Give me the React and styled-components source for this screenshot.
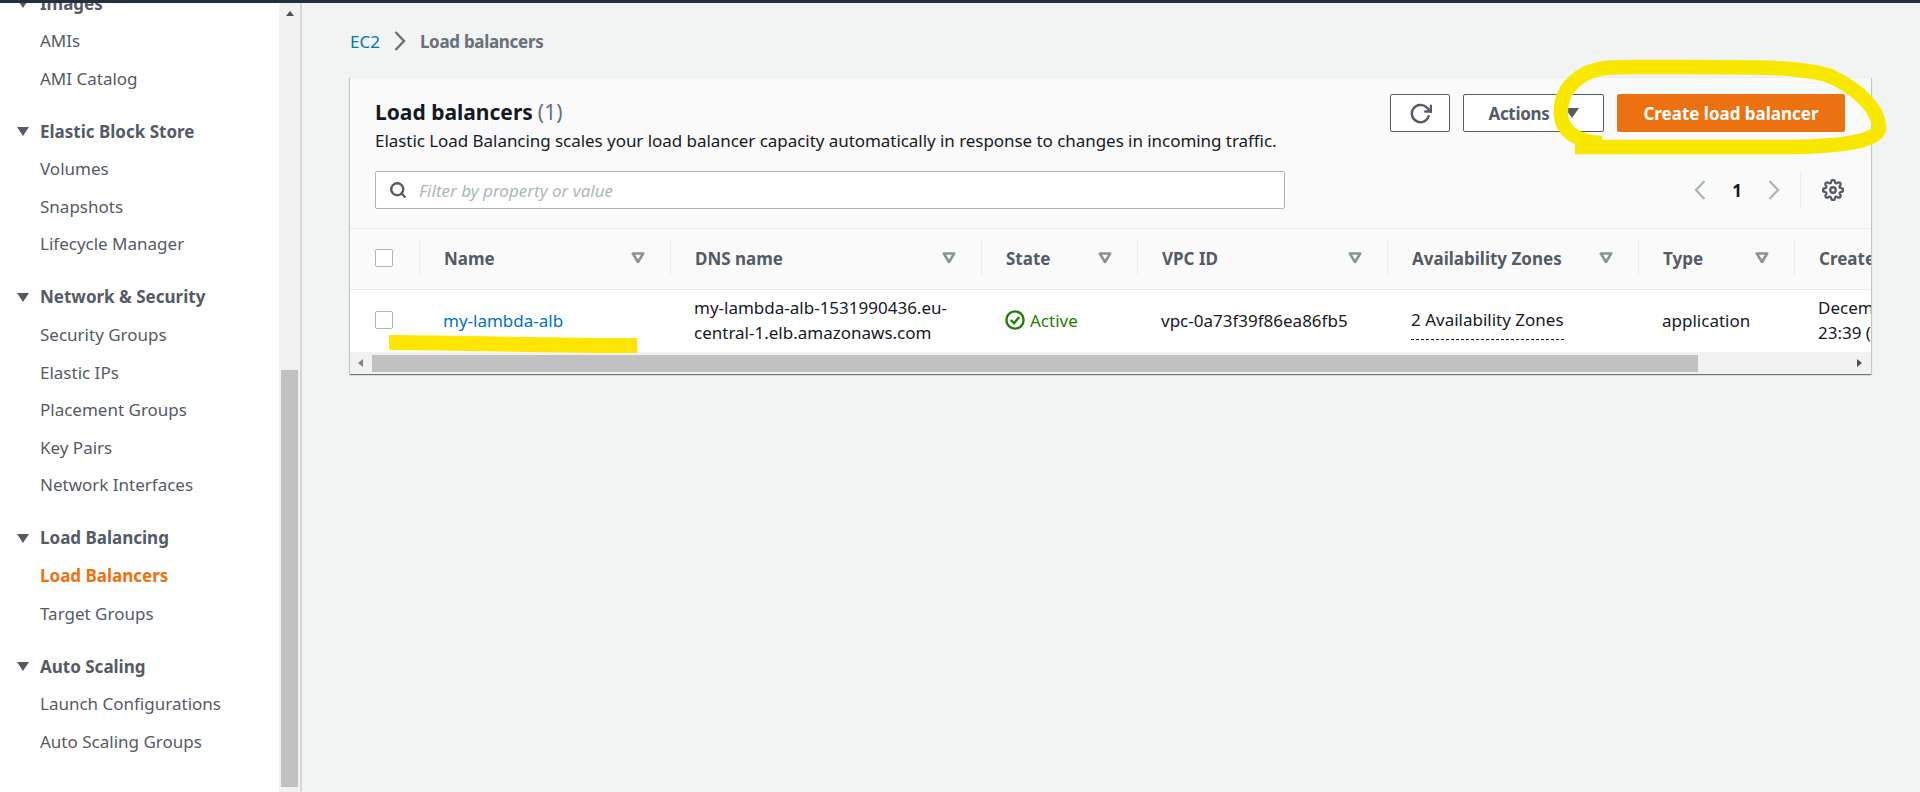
import React from 'react';
import styled, { createGlobalStyle } from 'styled-components';
import { FiRotateCw, FiSettings, FiSearch } from 'react-icons/fi';

const FONT = '"Noto Sans", "Open Sans", sans-serif';

const GlobalStyle = createGlobalStyle`
  html, body {
    margin: 0;
    padding: 0;
    height: 100%;
    overflow: hidden;
    background: #f2f3f3;
    font-family: ${FONT};
    font-size: 17px;
    color: #16191f;
  }
  #root { height: 100%; }
`;

const Page = styled.div`
  position: relative;
  display: flex;
  flex-direction: column;
  height: 792px;
  overflow: hidden;
`;

const TopLine = styled.div`
  height: 3px;
  flex: none;
  background: #232f3e;
`;

const Body = styled.div`
  display: flex;
  flex: 1;
  min-height: 0;
`;

const Sidebar = styled.aside`
  display: flex;
  width: 302px;
  flex: none;
  border-right: 2px solid #d5d8d8;
  box-sizing: border-box;
  background: #fff;
`;

const SideScroll = styled.nav`
  flex: 1;
  overflow: hidden;
`;

const SideList = styled.div`
  margin-top: -19px;
`;

const SideGroup = styled.div`
  margin-bottom: 15px;
`;

const SideHeading = styled.div`
  display: flex;
  align-items: center;
  height: 38px;
  font-weight: 700;
  color: #545b64;
`;

const HeadingCaret = styled.span`
  width: 0;
  height: 0;
  margin: 1px 11px 0 17px;
  border-left: 6px solid transparent;
  border-right: 6px solid transparent;
  border-top: 9px solid #545b64;
`;

const SideItem = styled.div`
  height: 37.6px;
  line-height: 37.6px;
  padding-left: 40px;
  font-weight: ${p => (p.$active ? 700 : 400)};
  color: ${p => (p.$active ? '#ec7211' : '#545b64')};
`;

const ScrollTrack = styled.div`
  width: 21px;
  flex: none;
  display: flex;
  flex-direction: column;
  align-items: center;
  background: #f1f1f1;
`;

const TrackArrow = styled.span`
  width: 0;
  height: 0;
  margin-top: 8px;
  border-left: 4px solid transparent;
  border-right: 4px solid transparent;
  border-bottom: 5px solid #505050;
`;

const TrackThumb = styled.div`
  width: 17px;
  height: 417px;
  margin-top: 354px;
  background: #c1c1c1;
`;

const Main = styled.main`
  flex: 1;
  min-width: 0;
  padding: 0 49px 0 48px;
`;

const Breadcrumbs = styled.div`
  display: flex;
  align-items: center;
  height: 74px;
  padding-top: 2px;
  box-sizing: border-box;
`;

const CrumbLink = styled.span`
  color: #0073bb;
`;

const CrumbSep = styled.span`
  display: flex;
  margin: 0 14px;
  color: #687078;
`;

const CrumbCurrent = styled.span`
  font-weight: 700;
  letter-spacing: -0.3px;
  color: #687078;
`;

const Card = styled.section`
  background: #fafafa;
  box-shadow: 0 1px 1px 0 rgba(0, 28, 36, 0.4), 1px 1px 1px 0 rgba(0, 28, 36, 0.15), -1px 1px 1px 0 rgba(0, 28, 36, 0.15);
  border-top: 1px solid #eaeded;
`;

const CardHead = styled.div`
  display: flex;
  justify-content: space-between;
  padding: 16px 26px 0 25px;
  height: 93px;
  box-sizing: border-box;
`;

const TitleBlock = styled.div`
  padding-top: 4px;
`;

const Title = styled.h1`
  margin: 0;
  font-size: 21px;
  line-height: 28px;
  font-weight: 700;
  color: #16191f;
`;

const Count = styled.span`
  font-weight: 400;
  color: #687078;
  margin-left: 5px;
`;

const Description = styled.p`
  margin: 4px 0 0;
  line-height: 22px;
  letter-spacing: -0.05px;
  color: #16191f;
`;

const Actions = styled.div`
  display: flex;
  gap: 13px;
`;

const OutlineButton = styled.button`
  display: flex;
  align-items: center;
  justify-content: center;
  gap: 15px;
  width: ${p => p.$width}px;
  height: 38px;
  padding: 0;
  box-sizing: border-box;
  border: 1px solid #545b64;
  border-radius: 2px;
  background: #fff;
  color: #545b64;
  font-family: ${FONT};
  font-size: 17px;
  font-weight: 700;
  letter-spacing: -0.3px;
`;

const ButtonCaret = styled.span`
  width: 0;
  height: 0;
  border-left: 7px solid transparent;
  border-right: 7px solid transparent;
  border-top: 10px solid #545b64;
`;

const PrimaryButton = styled.button`
  width: 228px;
  height: 38px;
  padding: 0;
  border: 0;
  border-radius: 2px;
  background: #ec7211;
  color: #fff;
  font-family: ${FONT};
  font-size: 17px;
  font-weight: 700;
`;

const FilterRow = styled.div`
  display: flex;
  align-items: center;
  justify-content: space-between;
  height: 38px;
  padding: 0 27px 0 25px;
  margin-bottom: 19px;
`;

const FilterBox = styled.div`
  display: flex;
  align-items: center;
  width: 910px;
  height: 38px;
  box-sizing: border-box;
  padding-left: 13px;
  gap: 12px;
  border: 1px solid #aab7b8;
  border-radius: 2px;
  background: #fff;
  color: #545b64;
`;

const Placeholder = styled.span`
  font-style: italic;
  color: #aab7b8;
`;

const Pager = styled.div`
  display: flex;
  align-items: center;
  height: 38px;
`;

const PageArrow = styled.span`
  display: flex;
  color: #aab7b8;
`;

const PageNumber = styled.span`
  width: 62px;
  text-align: center;
  font-weight: 700;
`;

const PagerDivider = styled.span`
  width: 1px;
  height: 38px;
  margin: 0 21px 0 20px;
  background: #eaeded;
`;

const GearIcon = styled.span`
  display: flex;
  color: #545b64;
`;

const TableArea = styled.div`
  overflow: hidden;
`;

const Row = styled.div`
  display: flex;
  width: 1700px;
  height: ${p => p.$height}px;
  box-sizing: border-box;
  padding-bottom: 2px;
  align-items: center;
  background: ${p => (p.$head ? '#fafafa' : '#fff')};
  border-top: 1px solid #eaeded;
`;

const CheckCell = styled.div`
  flex: none;
  width: 69px;
  padding-left: 25px;
  box-sizing: border-box;
  display: flex;
  margin-top: ${p => p.$shift || 0}px;
`;

const Checkbox = styled.span`
  width: 18px;
  height: 18px;
  box-sizing: border-box;
  border: 1px solid #aab7b8;
  border-radius: 2px;
  background: #fff;
`;

const HeadCell = styled.div`
  flex: none;
  display: flex;
  align-items: center;
  justify-content: space-between;
  width: ${p => p.$width}px;
  height: 36px;
  box-sizing: border-box;
  padding: 0 25px 0 24px;
  border-left: 1px solid #eaeded;
  font-weight: 700;
  color: #545b64;
  white-space: nowrap;
`;

const SortCaret = styled.svg`
  flex: none;
  width: 14px;
  height: 12px;
  color: #879596;
`;

const Cell = styled.div`
  flex: none;
  width: ${p => p.$width}px;
  box-sizing: border-box;
  padding: 0 20px 0 24px;
  line-height: 25px;
  color: #16191f;
`;

const NameLink = styled.span`
  color: #0073bb;
`;

const StatusOk = styled.span`
  display: flex;
  align-items: center;
  gap: 5px;
  color: #1d8102;
`;

const Dashed = styled.span`
  display: inline-block;
  padding: 7px 0;
  border-bottom: 1px dashed #16191f;
  white-space: nowrap;
`;

const HScroll = styled.div`
  display: flex;
  align-items: center;
  height: 22px;
  background: #f1f1f1;
`;

const HArrow = styled.span`
  width: 0;
  height: 0;
  flex: none;
  border-top: 4px solid transparent;
  border-bottom: 4px solid transparent;
  ${p => (p.$right ? 'border-left: 5px solid #505050;' : 'border-right: 5px solid #808080;')}
  margin: ${p => (p.$right ? '0 9px 0 159px' : '0 9px 0 8px')};
`;

const HThumb = styled.div`
  width: 1327px;
  height: 17px;
  background: #c1c1c1;
`;

const Scribble = styled.svg`
  position: absolute;
  top: 0;
  left: 0;
  pointer-events: none;
`;

const columns = [
  { title: 'Name', width: 251 },
  { title: 'DNS name', width: 311 },
  { title: 'State', width: 156 },
  { title: 'VPC ID', width: 250 },
  { title: 'Availability Zones', width: 251 },
  { title: 'Type', width: 156 },
  { title: 'Created', width: 300 },
];

const navGroups = [
  { title: 'Images', items: ['AMIs', 'AMI Catalog'] },
  { title: 'Elastic Block Store', items: ['Volumes', 'Snapshots', 'Lifecycle Manager'] },
  {
    title: 'Network & Security',
    items: ['Security Groups', 'Elastic IPs', 'Placement Groups', 'Key Pairs', 'Network Interfaces'],
  },
  { title: 'Load Balancing', items: ['Load Balancers', 'Target Groups'] },
  { title: 'Auto Scaling', items: ['Launch Configurations', 'Auto Scaling Groups'] },
];

const Sort = () => (
  <SortCaret viewBox="0 0 14 12">
    <path d="M1.8 1.5h10.4L7 10z" fill="none" stroke="currentColor" strokeWidth="2.6" strokeLinejoin="round" />
  </SortCaret>
);

const Chevron = ({ left }) => (
  <svg width="12" height="20" viewBox="0 0 12 20" fill="none" stroke="currentColor" strokeWidth="2.4">
    <path d={left ? 'M10.5 1L2 10l8.5 9' : 'M1.5 1L10 10l-8.5 9'} />
  </svg>
);

const ActiveIcon = () => (
  <svg width="20" height="20" viewBox="0 0 20 20" fill="none" stroke="#1d8102" strokeWidth="2.4">
    <circle cx="10" cy="10" r="8.6" />
    <path d="M5.8 10l3.2 3.2 5.2-6.2" />
  </svg>
);

const App = () => (
  <Page>
    <GlobalStyle />
    <TopLine />
    <Body>
      <Sidebar>
        <SideScroll>
          <SideList>
            {navGroups.map(group => (
              <SideGroup key={group.title}>
                <SideHeading>
                  <HeadingCaret />
                  {group.title}
                </SideHeading>
                {group.items.map(item => (
                  <SideItem key={item} $active={item === 'Load Balancers'}>
                    {item}
                  </SideItem>
                ))}
              </SideGroup>
            ))}
          </SideList>
        </SideScroll>
        <ScrollTrack>
          <TrackArrow />
          <TrackThumb />
        </ScrollTrack>
      </Sidebar>
      <Main>
        <Breadcrumbs>
          <CrumbLink>EC2</CrumbLink>
          <CrumbSep>
            <Chevron />
          </CrumbSep>
          <CrumbCurrent>Load balancers</CrumbCurrent>
        </Breadcrumbs>
        <Card>
          <CardHead>
            <TitleBlock>
              <Title>
                Load balancers<Count>(1)</Count>
              </Title>
              <Description>
                Elastic Load Balancing scales your load balancer capacity automatically in response to changes in
                incoming traffic.
              </Description>
            </TitleBlock>
            <Actions>
              <OutlineButton $width={60}>
                <FiRotateCw size={23} strokeWidth={2.6} />
              </OutlineButton>
              <OutlineButton $width={141}>
                Actions
                <ButtonCaret />
              </OutlineButton>
              <PrimaryButton>Create load balancer</PrimaryButton>
            </Actions>
          </CardHead>
          <FilterRow>
            <FilterBox>
              <FiSearch size={18} strokeWidth={3.2} />
              <Placeholder>Filter by property or value</Placeholder>
            </FilterBox>
            <Pager>
              <PageArrow>
                <Chevron left />
              </PageArrow>
              <PageNumber>1</PageNumber>
              <PageArrow>
                <Chevron />
              </PageArrow>
              <PagerDivider />
              <GearIcon>
                <FiSettings size={22} strokeWidth={2.5} />
              </GearIcon>
            </Pager>
          </FilterRow>
          <TableArea>
            <Row $head $height={61}>
              <CheckCell>
                <Checkbox />
              </CheckCell>
              {columns.map(col => (
                <HeadCell key={col.title} $width={col.width}>
                  {col.title}
                  <Sort />
                </HeadCell>
              ))}
            </Row>
            <Row $height={63}>
              <CheckCell>
                <Checkbox />
              </CheckCell>
              <Cell $width={251}>
                <NameLink>my-lambda-alb</NameLink>
              </Cell>
              <Cell $width={311}>my-lambda-alb-1531990436.eu-central-1.elb.amazonaws.com</Cell>
              <Cell $width={156}>
                <StatusOk>
                  <ActiveIcon />
                  Active
                </StatusOk>
              </Cell>
              <Cell $width={250}>vpc-0a73f39f86ea86fb5</Cell>
              <Cell $width={251}>
                <Dashed>2 Availability Zones</Dashed>
              </Cell>
              <Cell $width={156}>application</Cell>
              <Cell $width={300}>
                December 15, 2022,
                <br />
                23:39 (UTC+01:00)
              </Cell>
            </Row>
            <HScroll>
              <HArrow />
              <HThumb />
              <HArrow $right />
            </HScroll>
          </TableArea>
        </Card>
      </Main>
    </Body>
    <Scribble width="1920" height="792" viewBox="0 0 1920 792" fill="none">
      <path
        d="M1575 147L1780 147C1830 147 1879 143 1879 128C1879 110 1860 90 1830 76C1800 66 1750 67 1650 67C1620 67 1600 66 1585 74C1565 85 1560 100 1561 115C1562 130 1575 142 1602 143"
        stroke="#f8e800"
        strokeWidth="14.5"
      />
      <path d="M389 342.5C450 342.5 540 345.5 637 345.5" stroke="#ffe600" strokeWidth="15" />
    </Scribble>
  </Page>
);

export default App;
